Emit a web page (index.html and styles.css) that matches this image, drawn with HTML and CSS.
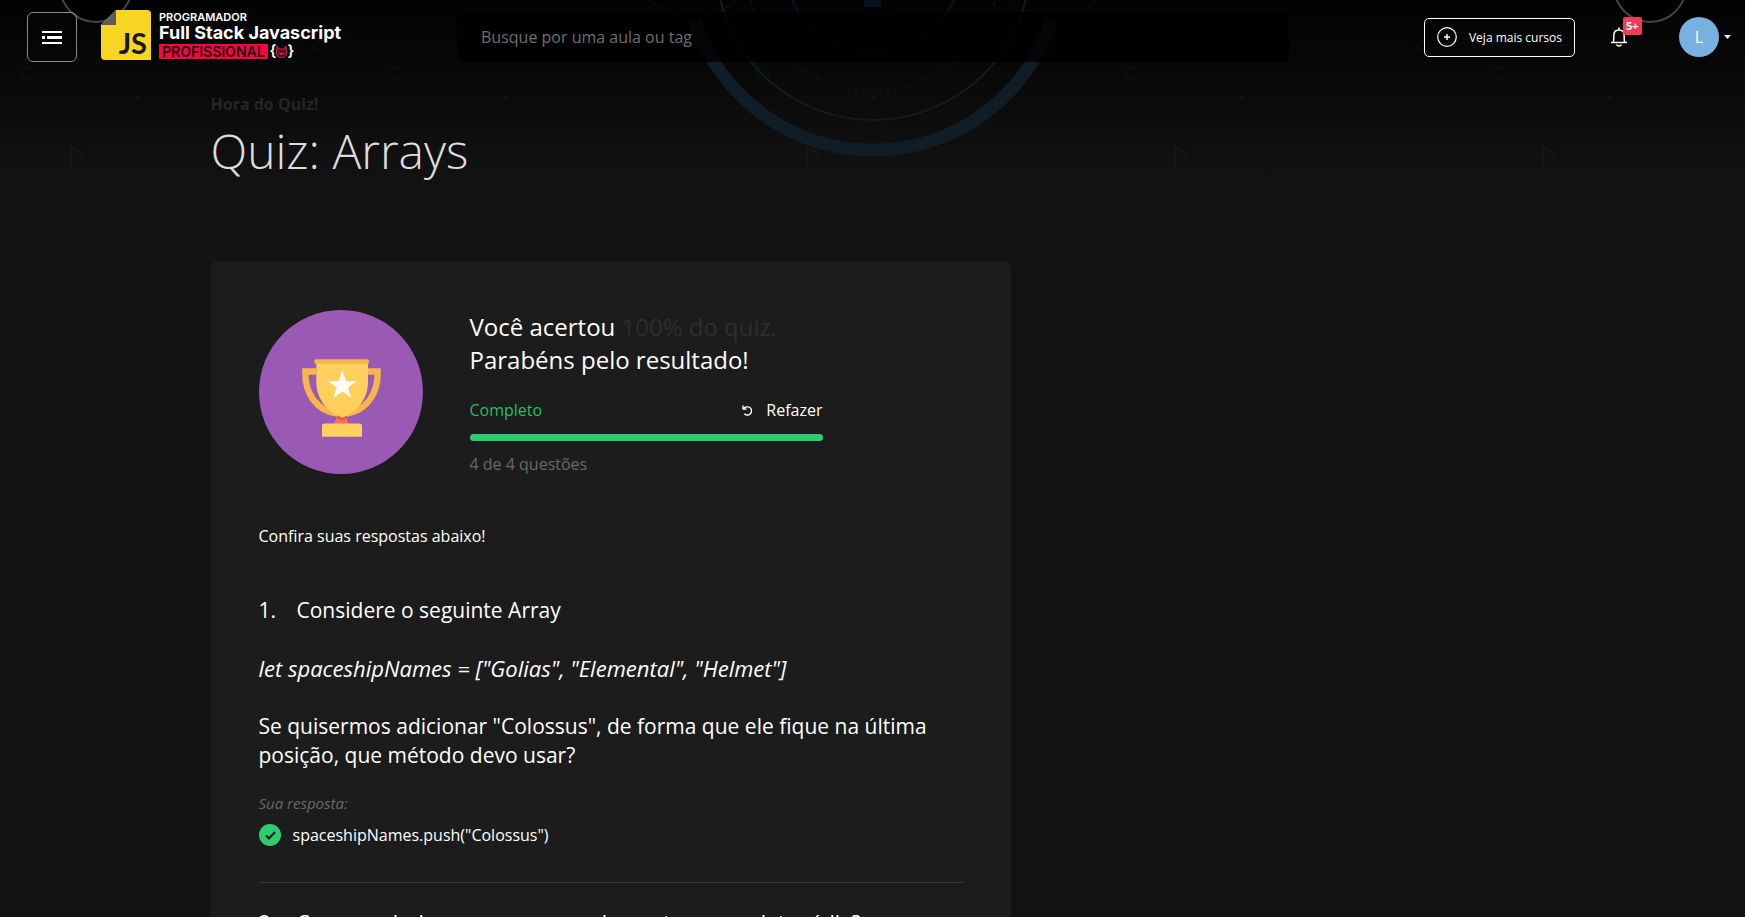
FILE: index.html
```html
<!DOCTYPE html>
<html lang="pt-BR">
<head>
<meta charset="utf-8">
<title>Quiz: Arrays</title>
<link rel="stylesheet" href="styles.css">
</head>
<body>
<div class="backdrop" aria-hidden="true">
  <svg class="backdrop-pattern" width="100%" height="200">
    <defs>
      <pattern id="shapes" width="368" height="200" patternUnits="userSpaceOnUse" fill="none">
        <path d="M71 147v18l13-11z" stroke-width="1" stroke="#151e1a"/>
        <path d="M21 68h11v11H21z" stroke="#0d0f0f"/>
        <circle cx="137" cy="98" r="2" fill="#111414"/>
        <path d="M310 49h11v-10z" stroke="#0c0f0e"/>
      </pattern>
    </defs>
    <rect width="100%" height="200" fill="url(#shapes)"/>
  </svg>
  <svg class="backdrop-rings" width="520" height="200" viewBox="612 0 520 200" fill="none">
    <path d="M693.500 20A187.500 187.500 0 0 0 1050.500 20" stroke="#111d26" stroke-width="13"/>
    <circle cx="872" cy="-37" r="157" stroke="#0f1f14" stroke-width="2"/>
    <circle cx="872" cy="-37" r="128" stroke="#2b1014" stroke-width="1" stroke-dasharray="4 4"/>
    <circle cx="872" cy="-37" r="89" stroke="#051422" stroke-width="2"/>
    <rect x="863" y="-10" width="17" height="17" fill="#041220"/>
    <circle cx="692" cy="-48" r="65" stroke="#07130e"/>
    <circle cx="1053" cy="-48" r="65" stroke="#1c070a"/>
  </svg>
  <svg class="backdrop-orb orb-left" width="70" height="24" viewBox="0 0 70 24"><circle cx="35" cy="-14" r="36" fill="#000" stroke="#454545" stroke-width="2"/></svg>
  <svg class="backdrop-orb orb-right" width="70" height="24" viewBox="0 0 70 24"><circle cx="35" cy="-14" r="36" fill="#000" stroke="#454545" stroke-width="2"/></svg>
</div>

<header class="topbar">
  <button class="menu-button" type="button" aria-label="Menu">
    <svg width="20" height="13" viewBox="0 0 20 13" fill="#fff"><path d="M0 0h20v2H0zM0 5h3v3H0zM5 5h15v3H5zM0 11h20v2H0z"/></svg>
  </button>
  <a class="brand" href="#">
    <span class="brand-tile">
      <svg class="brand-shape" width="50" height="50" viewBox="0 0 50 50"><path d="M15 0h31a4 4 0 0 1 4 4v46H4a4 4 0 0 1-4-4V15z" fill="#f8d523"/><path d="M15 0v15H0z" fill="#5c5c5a"/></svg>
      <span class="brand-js">JS</span>
    </span>
    <span class="brand-text">
      <span class="brand-over">PROGRAMADOR</span>
      <span class="brand-name">Full Stack Javascript</span>
      <span class="brand-line"><span class="brand-tag">PROFISSIONAL</span><span class="brand-brace">{</span><svg width="11" height="13" viewBox="0 0 11 13"><path d="M1 1l2 3h5l2-3 .5 7a5 5 0 0 1-10 0z" fill="#5a1020" stroke="#e01f48" stroke-width="1"/><path d="M3 8h5q-2.500 3-5 0z" fill="#ff2850"/></svg><span class="brand-brace">}</span></span>
    </span>
  </a>
  <form class="search">
    <input class="search-input" type="text" aria-label="Busca" placeholder="Busque por uma aula ou tag">
  </form>
  <div class="actions">
    <button class="more-button" type="button">
      <svg width="20" height="20" viewBox="0 0 20 20" fill="none" stroke="#fff"><circle cx="10" cy="10" r="9.300" stroke-width="1.200"/><path d="M10 7v6M7 10h6" stroke-width="1.400"/></svg>
      Veja mais cursos
    </button>
    <button class="bell-button" type="button" aria-label="Notificações">
      <svg width="16" height="20" viewBox="0 0 16 20" fill="none" stroke="#fff" stroke-width="1.500"><path d="M0 15.500h16M2.200 15.500C3 14 2.800 12 2.800 8.500 2.800 5 5 3 8 3s5.200 2 5.200 5.500c0 3.500-.2 5.500.6 7M8 3V.5M5.500 17.500c1 2 4 2 5 0"/></svg>
      <span class="badge">5+</span>
    </button>
    <button class="user-button" type="button" aria-label="Conta">
      <span class="avatar">L</span>
      <svg width="7" height="4" viewBox="0 0 7 4"><path d="M0 0h7L3.500 4z" fill="#eee"/></svg>
    </button>
  </div>
</header>

<main class="page">
  <p class="eyebrow">Hora do Quiz!</p>
  <h1 class="title">Quiz: Arrays</h1>
  <section class="card">
    <div class="result">
      <svg class="trophy" width="164" height="164" viewBox="174 179 492 491">
        <circle cx="420" cy="424.500" r="246" fill="#9b59b6"/>
        <path d="M346 363h-33c-2 66 34 118 96 126M500 363h30c2 66-34 118-93 126" fill="none" stroke="#f7b64c" stroke-width="19"/>
        <path d="M410 494h26l4 28h-42z" fill="#ff7058"/>
        <path d="M409 494h30q-14 28-30 6z" fill="#f1543f"/>
        <path d="M346 334h155v60c0 42-22 86-77 108-56-22-78-66-78-108z" fill="#ffd15c"/>
        <rect x="340" y="326" width="164" height="14" rx="5" fill="#f7b64c"/>
        <path d="M363 559v-32q0-8 8-8h104q8 0 8 8v32z" fill="#ffd15c"/>
        <path d="M424 361l11 31h32l-26 19 9 31-26-19-27 19 10-31-26-19h32z" fill="#fff"/>
      </svg>
      <div class="summary">
        <h2 class="headline">Você acertou <span class="muted-score">100% do quiz.</span><br>Parabéns pelo resultado!</h2>
        <div class="status">
          <span id="done" class="done">Completo</span>
          <button class="redo" type="button">
            <svg width="11" height="11" viewBox="0 0 11 11" fill="none" stroke="#fff" stroke-width="1.300"><path d="M1 .5v3.700h3.700M1.200 4C3 .7 9.500 1.200 9.500 5.800c0 4.500-5 5.200-7.200 2.900"/></svg>
            Refazer
          </button>
        </div>
        <div class="bar" role="progressbar" aria-labelledby="done" aria-valuenow="100"><div class="bar-fill" style="width:100%"></div></div>
        <p class="count">4 de 4 questões</p>
      </div>
    </div>
    <p class="check">Confira suas respostas abaixo!</p>
    <article class="question">
      <p class="first-line"><span class="number">1.</span>Considere o seguinte Array</p>
      <p class="code-line"><em>let spaceshipNames = ["Golias", "Elemental", "Helmet"]</em></p>
      <p>Se quisermos adicionar "Colossus", de forma que ele fique na última posição, que método devo usar?</p>
      <p class="answer-label">Sua resposta:</p>
      <p class="answer">
        <svg width="22" height="22" viewBox="0 0 22 22"><circle cx="11" cy="11" r="11" fill="#2ecc71"/><path d="M7 11.500l3 3L16 8" fill="none" stroke="#1c1c1c" stroke-width="2"/></svg>
        spaceshipNames.push("Colossus")
      </p>
    </article>
    <article class="question">
      <p class="first-line"><span class="number">2.</span>Como poderiamos remover o elemento menos let média?</p>
    </article>
  </section>
</main>
</body>
</html>
```
FILE: styles.css
```css
* { box-sizing: border-box; }
body {
  margin: 0;
  height: 100vh;
  overflow: hidden;
  background: #131313 linear-gradient(#020202, #131313 190px) no-repeat;
  color: #fff;
  font-family: "Open Sans", "Noto Sans", sans-serif;
  font-size: 16px;
}
p, h1, h2 { margin: 0; font-weight: 400; }
button {
  font: inherit;
  color: inherit;
  background: none;
  border: 0;
  padding: 0;
  cursor: pointer;
}
svg { display: block; flex: none; }

.backdrop { position: absolute; inset: 0; z-index: -1; overflow: hidden; }
.backdrop svg { position: absolute; top: 0; }
.backdrop-rings { left: calc(50% - 260px); }
.orb-left { left: 61px; }
.orb-right { right: 60px; }

.topbar {
  display: flex;
  align-items: center;
  height: 74px;
  padding: 0 14px 0 27px;
}
.menu-button {
  display: grid;
  place-items: center;
  width: 50px;
  height: 50px;
  border: 1px solid #8a8a8a;
  border-radius: 6px;
}
.brand {
  display: flex;
  align-items: center;
  gap: 8px;
  width: 380px;
  padding-left: 24px;
  padding-bottom: 4px;
  color: #fff;
  text-decoration: none;
  font-family: Inter, sans-serif;
}
.brand-tile { display: grid; width: 50px; height: 50px; }
.brand-shape, .brand-js { grid-area: 1 / 1; }
.brand-js {
  place-self: end;
  padding-right: 4px;
  color: #1c1a10;
  font: 700 29px/34px Lato, sans-serif;
}
.brand-text { display: flex; flex-direction: column; align-items: flex-start; white-space: nowrap; }
.brand-over { font-size: 11px; font-weight: 600; line-height: 12px; }
.brand-name { font-size: 18px; font-weight: 700; line-height: 20px; }
.brand-line { display: flex; align-items: center; height: 16px; }
.brand-tag {
  margin-right: 2px;
  padding: 0 3px;
  background: #ff0043;
  color: #12060a;
  font-size: 14px;
  font-weight: 600;
  line-height: 15px;
}
.brand-brace { font-size: 15px; font-weight: 600; line-height: 16px; }
.search { flex: 0 1 832px; }
.search-input {
  display: block;
  width: 100%;
  height: 50px;
  padding: 0 24px;
  border: 0;
  border-radius: 6px;
  background: rgba(0, 0, 0, 0.8);
  color: #fff;
  font: inherit;
}
.search-input::placeholder { color: #6e6e6e; opacity: 1; }
.actions { display: flex; align-items: center; margin-left: auto; }
.more-button {
  display: flex;
  align-items: center;
  gap: 12px;
  height: 39px;
  padding: 0 12px;
  border: 1px solid #fff;
  border-radius: 5px;
  font-size: 12px;
  font-weight: 500;
}
.bell-button { position: relative; margin: 0 52px 0 36px; }
.badge {
  position: absolute;
  top: -10px;
  left: 12px;
  padding: 0 3px;
  border-radius: 2px;
  background: #ef3e52;
  font-size: 11px;
  font-weight: 700;
  line-height: 18px;
}
.user-button { display: flex; align-items: center; gap: 5px; }
.avatar {
  width: 40px;
  border-radius: 50%;
  background: #78b0e0;
  font-size: 16px;
  line-height: 40px;
}

.page { max-width: 1324px; margin: 0 auto; padding-top: 19px; }
.eyebrow { color: #262626; font-weight: 700; line-height: 22px; }
.title {
  margin-bottom: 76px;
  color: #ddd;
  font-size: 48px;
  font-weight: 300;
  line-height: 71px;
}
.card {
  max-width: 800px;
  padding: 48px;
  border-radius: 5px;
  background: #1c1c1c;
}
.result { display: flex; gap: 47px; }
.summary { flex: 0 1 353px; }
.headline { font-size: 24px; line-height: 33px; }
.muted-score { color: #2e2e2e; }
.status { display: flex; justify-content: space-between; margin: 23px 0 13px; line-height: 22px; }
.done { color: #29bd64; }
.redo { display: flex; align-items: center; gap: 13px; }
.bar { height: 7px; }
.bar-fill { height: 100%; border-radius: 4px; background: #2ecc71; }
.count { margin-top: 12px; color: #696969; line-height: 22px; }
.check { margin: 50px 0 49px; line-height: 22px; }
.question { font-size: 21px; line-height: 29px; }
.question p { margin-bottom: 29px; }
.question .code-line { font-size: 22px; }
.question + .question { margin-top: 36px; padding-top: 26px; border-top: 1px solid #3a3a3a; }
.number { display: inline-block; width: 38px; }
.question .answer-label { margin: -7px 0 10px; color: #6a6a6a; font-size: 15px; font-style: italic; line-height: 22px; }
.question .answer { display: flex; align-items: center; gap: 12px; margin: 0; font-size: 16px; line-height: 22px; }
```
